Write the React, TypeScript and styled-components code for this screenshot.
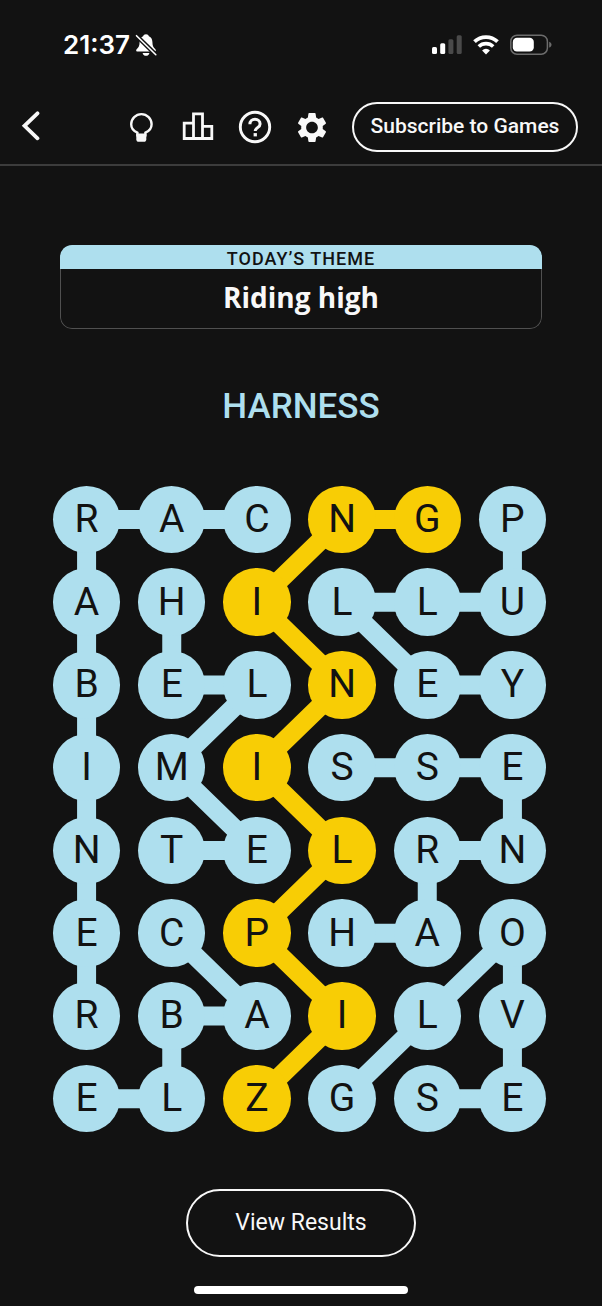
import React from 'react';
import styled, { createGlobalStyle } from 'styled-components';

const colors = {
  bg: '#121212',
  blue: '#aedfee',
  yellow: '#f8cd05',
  line: '#3c3c3c',
  cardLine: '#505050',
  white: '#f8f8f8',
};

const GlobalStyle = createGlobalStyle`
  * { box-sizing: border-box; }
  body { margin: 0; background: ${colors.bg}; }
  button { font: inherit; color: inherit; background: none; border: 0; padding: 0; cursor: pointer; }
`;

const Page = styled.div`
  min-height: 100vh;
  display: flex;
  flex-direction: column;
  background: ${colors.bg};
  color: ${colors.white};
  font-family: Roboto, 'Liberation Sans', sans-serif;
`;

const StatusBar = styled.div`
  display: flex;
  align-items: center;
  justify-content: space-between;
  height: 90px;
  padding: 0 50px 0 63px;
  color: #ffffff;
`;

const StatusGroup = styled.div<{ $gap: number }>`
  display: flex;
  align-items: center;
  gap: ${(p) => p.$gap}px;
`;

const Time = styled.time`
  font-family: Inter, sans-serif;
  font-size: 26px;
  font-weight: 600;
  line-height: 30px;
`;

const Header = styled.header`
  display: flex;
  align-items: center;
  height: 76px;
  padding: 0 24px 0 20px;
  border-bottom: 2px solid ${colors.line};
`;

const Tools = styled.nav`
  display: flex;
  align-items: center;
  gap: 21px;
  margin: 0 22px 0 auto;
`;

const IconButton = styled.button`
  display: flex;
  align-items: center;
  justify-content: center;
  width: 36px;
  height: 36px;
`;

const BackButton = styled(IconButton)`
  width: 22px;
`;

const PillButton = styled.button<{ $size: 'small' | 'large' }>`
  border: 2px solid ${colors.white};
  border-radius: 40px;
  height: ${(p) => (p.$size === 'small' ? 50 : 68)}px;
  padding: 0 0 2px;
  width: ${(p) => (p.$size === 'small' ? 226 : 230)}px;
  font-size: ${(p) => (p.$size === 'small' ? 21 : 23)}px;
  font-weight: ${(p) => (p.$size === 'small' ? 500 : 400)};
  white-space: nowrap;
`;

const Main = styled.main`
  display: flex;
  flex-direction: column;
  padding-top: 79px;
`;

const ThemeCard = styled.section`
  margin: 0 60px;
  border-radius: 12px;
  overflow: hidden;
  text-align: center;
`;

const ThemeLabel = styled.h2`
  margin: 0;
  height: 24px;
  background: ${colors.blue};
  color: ${colors.bg};
  font-size: 18px;
  font-weight: 500;
  line-height: 27px;
  letter-spacing: 1px;
`;

const ThemeName = styled.p`
  margin: 0;
  height: 60px;
  border: 1px solid ${colors.cardLine};
  border-top: 0;
  border-radius: 0 0 12px 12px;
  font-family: 'Open Sans', sans-serif;
  font-size: 28px;
  font-weight: 700;
  line-height: 56px;
`;

const CurrentWord = styled.p`
  margin: 56px 0 0;
  color: ${colors.blue};
  font-size: 35px;
  font-weight: 500;
  line-height: 44px;
  text-align: center;
`;

const Board = styled.div`
  position: relative;
  margin: 49px 47px 0 44px;
  aspect-ratio: 511 / 662;
`;

const Links = styled.svg`
  position: absolute;
  inset: 0;
  width: 100%;
  height: 100%;
`;

const Cells = styled.div`
  position: relative;
  height: 100%;
  display: grid;
  grid-template-columns: repeat(6, 1fr);
  grid-template-rows: repeat(8, 1fr);
  place-items: center;
`;

const Letter = styled.button<{ $spangram: boolean }>`
  width: 79%;
  aspect-ratio: 1;
  border-radius: 50%;
  background: ${(p) => (p.$spangram ? colors.yellow : colors.blue)};
  color: ${colors.bg};
  font-size: 39px;
  line-height: 1;
`;

const Footer = styled.footer`
  display: flex;
  flex-direction: column;
  align-items: center;
  gap: 29px;
  padding: 49px 0 12px;
`;

const HomeIndicator = styled.div`
  width: 214px;
  height: 8px;
  border-radius: 4px;
  background: #ffffff;
`;

const rows = ['RACNGP', 'AHILLU', 'BELNEY', 'IMISSE', 'NTELRN', 'ECPHAO', 'RBAILV', 'ELZGSE'];

type Path = { cells: [number, number][]; spangram?: boolean };

// Each path lists the [column, row] cells that a found word runs through.
const paths: Path[] = [
  { cells: [[2, 0], [1, 0], [0, 0], [0, 1], [0, 2], [0, 3], [0, 4], [0, 5], [0, 6]] },
  { cells: [[1, 1], [1, 2], [2, 2], [1, 3], [2, 4], [1, 4]] },
  { cells: [[5, 0], [5, 1], [4, 1], [3, 1], [4, 2], [5, 2]] },
  { cells: [[3, 5], [4, 5], [4, 4], [5, 4], [5, 3], [4, 3], [3, 3]] },
  { cells: [[1, 5], [2, 6], [1, 6], [1, 7], [0, 7]] },
  { cells: [[3, 7], [4, 6], [5, 5], [5, 6], [5, 7], [4, 7]] },
  {
    cells: [[2, 7], [3, 6], [2, 5], [3, 4], [2, 3], [3, 2], [2, 1], [3, 0], [4, 0]],
    spangram: true,
  },
];

const isSpangram = (col: number, row: number) =>
  paths.some((p) => p.spangram && p.cells.some(([c, r]) => c === col && r === row));

const toPoints = (cells: [number, number][]) =>
  cells.map(([c, r]) => `${((c + 0.5) * 511) / 6},${((r + 0.5) * 662) / 8}`).join(' ');

const BellOff = () => (
  <svg width="22" height="24" viewBox="0 0 22 24" aria-label="Silent mode">
    <path
      d="M11 1.2c-1.5 0-2.6.9-2.9 2.1C5.6 4.3 4.7 6.5 4.6 9c-.1 3.7-.8 5.2-2.5 6.8-.8.8-.9 1-.9 1.6 0 .7.5 1.1 1.2 1.1h17.2c.7 0 1.2-.4 1.2-1.1 0-.6-.1-.8-.9-1.6-1.7-1.6-2.4-3.1-2.5-6.8-.1-2.5-1-4.7-3.5-5.7C13.6 2.1 12.5 1.2 11 1.2z"
      fill="currentColor"
    />
    <path d="M7.6 19.9h6.8c-.3 1.7-1.6 2.9-3.4 2.9s-3.1-1.2-3.4-2.9z" fill="currentColor" />
    <path d="M1.5 2.7 20.8 21.7" stroke={colors.bg} strokeWidth="4.4" />
    <path d="M1.5 2.7 20.8 21.7" stroke="currentColor" strokeWidth="1.6" strokeLinecap="round" />
  </svg>
);

const Signal = () => (
  <svg width="30" height="20" viewBox="0 0 30 20" fill="currentColor" aria-label="Signal">
    <rect x="0" y="12" width="5" height="7" rx="1.5" />
    <rect x="8.2" y="8.2" width="5" height="10.8" rx="1.5" />
    <rect x="16.4" y="4.2" width="5" height="14.8" rx="1.5" opacity=".24" />
    <rect x="24.7" y="0.2" width="5" height="18.8" rx="1.5" opacity=".24" />
  </svg>
);

const Wifi = () => (
  <svg width="26" height="20" viewBox="0 0 26 20" fill="none" stroke="currentColor" aria-label="Wi-Fi">
    <path d="M1.500 6.700a16.500 16.500 0 0 1 23 0" strokeWidth="3.800" />
    <path d="M5.800 11.500a10.400 10.400 0 0 1 14.400 0" strokeWidth="3.600" />
    <path d="M13 19.400l-3.900-4a5.600 5.600 0 0 1 7.800 0z" fill="currentColor" stroke="none" />
  </svg>
);

const Battery = () => (
  <svg width="42" height="22" viewBox="0 0 42 22" aria-label="Battery">
    <rect x=".8" y="1.2" width="36.6" height="19" rx="6.2" fill="none" stroke="#6c6c6c" strokeWidth="1.5" />
    <rect x="2.8" y="3.8" width="21" height="13.8" rx="4.2" fill="currentColor" />
    <path d="M39.2 7.8c1.4.5 2.3 1.6 2.3 2.9s-.9 2.400-2.300 2.900z" fill="#6c6c6c" />
  </svg>
);

const Back = () => (
  <svg width="22" height="32" viewBox="0 0 22 32" fill="none" stroke="currentColor" strokeWidth="3.8">
    <path d="M17.500 2.300 4.500 14.800l13 12.500" strokeLinecap="round" />
  </svg>
);

const Bulb = () => (
  <svg width="36" height="36" viewBox="0 0 36 36">
    <path
      d="M14.400 26.200v-2.500c-3.600-1.500-6.200-4.400-6.200-8.400a10.200 10.200 0 0 1 20.400 0c0 4-2.600 6.900-6.200 8.400v2.500z"
      fill="none"
      stroke="currentColor"
      strokeWidth="2.400"
    />
    <path d="M13.300 24.600h10v5.600c0 1.600-.9 2.600-2.500 2.600h-5c-1.600 0-2.500-1-2.500-2.600z" fill="currentColor" />
  </svg>
);

const Podium = () => (
  <svg width="36" height="36" viewBox="0 0 36 36" fill="none" stroke="currentColor" strokeWidth="2.8">
    <path d="M4.200 14.200h9.300v15.300H4.200zM13.500 4.800h9v24.700h-9zM22.500 17.300h9.300v12.200h-9.300z" />
  </svg>
);

const Help = () => (
  <svg width="36" height="36" viewBox="0 0 36 36" fill="none">
    <circle cx="18" cy="18" r="14.7" stroke="currentColor" strokeWidth="2.9" />
    <path
      d="M12.900 15.200c0-3 2.200-4.900 5.100-4.900s5.100 1.800 5.100 4.600c0 3.600-4.900 3.900-4.900 7.200"
      stroke="currentColor"
      strokeWidth="3"
    />
    <path d="M16.600 24.100h3.300v3.300h-3.300z" fill="currentColor" />
  </svg>
);

const Gear = () => (
  <svg width="39" height="39" viewBox="0 0 24 24" fill="currentColor">
    <path d="M19.140 12.940c.04-.3.06-.61.06-.94 0-.32-.02-.64-.07-.94l2.030-1.580c.18-.14.23-.41.12-.61l-1.920-3.320c-.12-.22-.37-.29-.59-.22l-2.390.96c-.5-.38-1.030-.7-1.620-.94l-.36-2.540c-.04-.24-.24-.41-.48-.41h-3.840c-.24 0-.43.17-.47.41l-.36 2.540c-.59.24-1.130.57-1.620.94l-2.390-.96c-.22-.08-.47 0-.59.22L2.740 8.870c-.12.21-.08.47.12.61l2.030 1.580c-.05.3-.09.63-.09.94s.02.64.07.94l-2.030 1.580c-.18.14-.23.41-.12.61l1.920 3.320c.12.22.37.29.59.22l2.390-.96c.5.38 1.030.7 1.620.94l.36 2.540c.05.24.24.41.48.41h3.840c.24 0 .44-.17.47-.41l.36-2.540c.59-.24 1.130-.56 1.620-.94l2.390.96c.22.08.47 0 .59-.22l1.920-3.320c.12-.22.07-.47-.12-.61l-2.010-1.580zM12 15.900c-2.150 0-3.900-1.750-3.900-3.900s1.750-3.900 3.900-3.900 3.900 1.750 3.900 3.900-1.750 3.900-3.900 3.900z" />
  </svg>
);

export default function App() {
  return (
    <Page>
      <GlobalStyle />
      <StatusBar>
        <StatusGroup $gap={5}>
          <Time>21:37</Time>
          <BellOff />
        </StatusGroup>
        <StatusGroup $gap={11}>
          <Signal />
          <Wifi />
          <Battery />
        </StatusGroup>
      </StatusBar>
      <Header>
        <BackButton aria-label="Back"><Back /></BackButton>
        <Tools>
          <IconButton aria-label="Hint"><Bulb /></IconButton>
          <IconButton aria-label="Statistics"><Podium /></IconButton>
          <IconButton aria-label="Help"><Help /></IconButton>
          <IconButton aria-label="Settings"><Gear /></IconButton>
        </Tools>
        <PillButton $size="small">Subscribe to Games</PillButton>
      </Header>
      <Main>
        <ThemeCard>
          <ThemeLabel>TODAY’S THEME</ThemeLabel>
          <ThemeName>Riding high</ThemeName>
        </ThemeCard>
        <CurrentWord>HARNESS</CurrentWord>
        <Board>
          <Links viewBox="0 0 511 662" fill="none" strokeWidth="19" aria-hidden="true">
            {paths.map((p, i) => (
              <polyline
                key={i}
                points={toPoints(p.cells)}
                stroke={p.spangram ? colors.yellow : colors.blue}
              />
            ))}
          </Links>
          <Cells>
            {rows.flatMap((row, r) =>
              row.split('').map((letter, c) => (
                <Letter key={`${c}-${r}`} $spangram={isSpangram(c, r)}>
                  {letter}
                </Letter>
              )),
            )}
          </Cells>
        </Board>
      </Main>
      <Footer>
        <PillButton $size="large">View Results</PillButton>
        <HomeIndicator />
      </Footer>
    </Page>
  );
}
